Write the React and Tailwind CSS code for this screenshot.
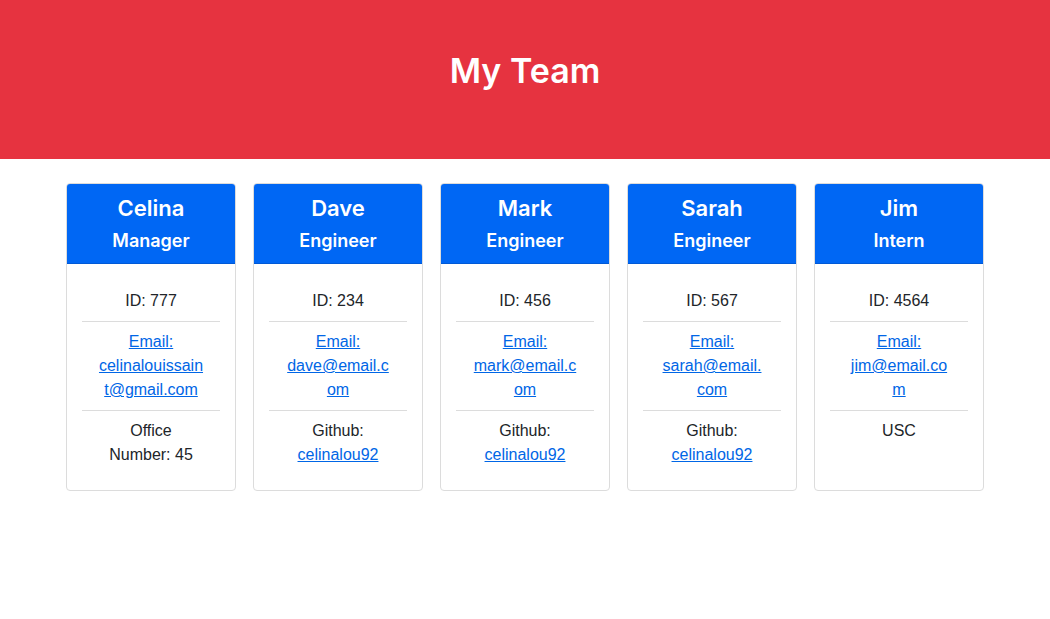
import React from 'react';

const team = [
  { name: 'Celina', role: 'Manager', id: 777, email: 'celinalouissaint@gmail.com', extra: { label: 'Office Number: 45' } },
  { name: 'Dave', role: 'Engineer', id: 234, email: 'dave@email.com', extra: { github: 'celinalou92' } },
  { name: 'Mark', role: 'Engineer', id: 456, email: 'mark@email.com', extra: { github: 'celinalou92' } },
  { name: 'Sarah', role: 'Engineer', id: 567, email: 'sarah@email.com', extra: { github: 'celinalou92' } },
  { name: 'Jim', role: 'Intern', id: 4564, email: 'jim@email.com', extra: { label: 'USC' } },
];

function EmployeeCard({ person }) {
  return (
    <div className="w-[170px] flex flex-col border border-[#dcdcdc] rounded-[4px] bg-white overflow-hidden">
      <div className="bg-[#0067f4] text-white text-center pt-[10px] pb-[10px] px-4 border-b border-[#0059d6] font-['Inter',sans-serif] font-semibold">
        <div className="text-[22px] leading-[29px]">{person.name}</div>
        <div className="text-[18px] leading-[24px] mt-[6px]">{person.role}</div>
      </div>
      <div className="px-[15px] pt-[17px] pb-[15px]">
        <ul className="text-center text-[16px] leading-[24px] text-[#212529]">
          <li className="py-2 px-4 border-b border-[#dcdcdc]">ID: {person.id}</li>
          <li className="py-2 px-4 border-b border-[#dcdcdc] break-words">
            <a href={`mailto:${person.email}`} className="text-[#0066e6] underline">
              Email: {person.email}
            </a>
          </li>
          <li className="py-2 px-4 break-words">
            {person.extra.github ? (
              <>
                Github:{' '}
                <a href={`https://github.com/${person.extra.github}`} className="text-[#0066e6] underline">
                  {person.extra.github}
                </a>
              </>
            ) : (
              person.extra.label
            )}
          </li>
        </ul>
      </div>
    </div>
  );
}

export default function App() {
  return (
    <div className="min-h-screen bg-white font-['Liberation_Sans',Arial,sans-serif]">
      <header className="bg-[#e63340] h-[159px] flex items-center justify-center">
        <h1 className="text-white text-[34px] font-semibold font-['Inter',sans-serif] -mt-[18px]">My Team</h1>
      </header>
      <main className="flex justify-center items-stretch gap-[17px] pt-6">
        {team.map((p) => (
          <EmployeeCard key={p.name} person={p} />
        ))}
      </main>
    </div>
  );
}
